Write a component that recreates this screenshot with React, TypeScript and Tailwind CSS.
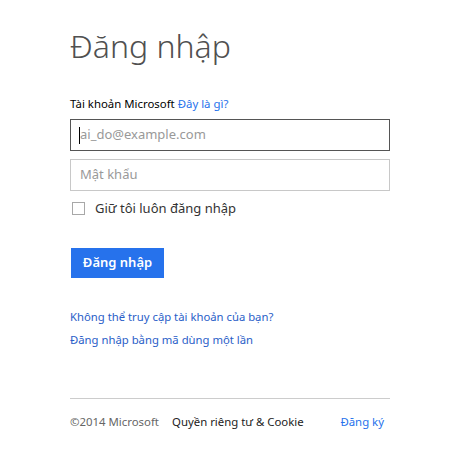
export default function App() {
  return (
    <div className="w-[449px] h-[459px] bg-white font-['Noto_Sans',sans-serif] text-[#222]">
      <div className="pl-[70px] w-[390px]">
        <h1 className="pt-[22px] text-[32px] font-light leading-[48px] text-[#505050]">Đăng nhập</h1>
        <div className="mt-[26px] text-[11.4px] leading-[16px] text-black">
          Tài khoản Microsoft <span className="text-[#2672ec]">Đây là gì?</span>
        </div>
        <div className="mt-[7px] h-[32px] border border-[#555] flex items-center pl-[8px]">
          <span className="w-px h-[17px] bg-black"></span>
          <span className="text-[13px] text-[#999]">ai_do@example.com</span>
        </div>
        <div className="mt-[8px] h-[32px] border border-[#c8c8c8] flex items-center pl-[9px] text-[13px] text-[#999]">
          Mật khẩu
        </div>
        <div className="mt-[11px] flex items-center h-[13px]">
          <span className="ml-[2px] w-[13px] h-[13px] border border-[#a8a8a8]"></span>
          <span className="ml-[10px] text-[13px] text-[#333]">Giữ tôi luôn đăng nhập</span>
        </div>
        <button className="mt-[33px] ml-[1px] w-[93px] h-[30px] bg-[#2672ec] text-white text-[13px] font-semibold">
          Đăng nhập
        </button>
        <div className="mt-[30px] flex flex-col gap-[5px] text-[11.3px] leading-[18px] text-[#2a5ec8]">
          <span>Không thể truy cập tài khoản của bạn?</span>
          <span>Đăng nhập bằng mã dùng một lần</span>
        </div>
        <div className="mt-[49px] border-t border-[#cccccc] flex items-center pt-[14px] text-[11.4px] leading-[18px]">
          <span className="text-[#666]">©2014 Microsoft</span>
          <span className="ml-[13px] text-[#222]">Quyền riêng tư &amp; Cookie</span>
          <span className="ml-auto mr-[6px] text-[#2672ec]">Đăng ký</span>
        </div>
      </div>
    </div>
  );
}
